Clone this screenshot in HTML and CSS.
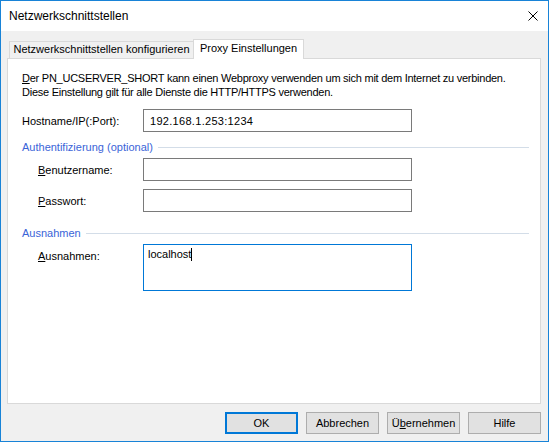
FILE: index.html
```html
<!DOCTYPE html>
<html lang="de">
<head>
<meta charset="utf-8">
<title>Netzwerkschnittstellen</title>
<link rel="stylesheet" href="styles.css">
</head>
<body>
<div class="window">
  <div class="titlebar">
    <span class="title">Netzwerkschnittstellen</span>
    <svg class="close" width="10" height="10" viewBox="0 0 10 10" aria-hidden="true"><path d="M0.5 0.5 L9.5 9.5 M9.5 0.5 L0.5 9.5" stroke="#000" stroke-width="1" fill="none"/></svg>
  </div>
  <div class="body">
    <div class="tabs">
      <div class="tab">Netzwerkschnittstellen konfigurieren</div>
      <div class="tab active">Proxy Einstellungen</div>
    </div>
    <div class="panel">
      <p class="intro"><u>D</u>er PN_UCSERVER_SHORT kann einen Webproxy verwenden um sich mit dem Internet zu verbinden.<br>Diese Einstellung gilt für alle Dienste die HTTP/HTTPS verwenden.</p>
      <div class="row">
        <span class="lbl">Hostname/IP(:Port):</span>
        <div class="input ip">192.168.1.253:1234</div>
      </div>
      <div class="group"><span>Authentifizierung (optional)</span><i class="rule"></i></div>
      <div class="row sub first">
        <span class="lbl"><u>B</u>enutzername:</span>
        <div class="input"></div>
      </div>
      <div class="row sub">
        <span class="lbl"><u>P</u>asswort:</span>
        <div class="input"></div>
      </div>
      <div class="group second"><span>Ausnahmen</span><i class="rule"></i></div>
      <div class="row sub first top">
        <span class="lbl"><u>A</u>usnahmen:</span>
        <div class="input area">localhost<span class="caret"></span></div>
      </div>
    </div>
    <div class="buttons">
      <button class="btn default">OK</button>
      <button class="btn">Abbrechen</button>
      <button class="btn">Ü<u>b</u>ernehmen</button>
      <button class="btn">Hilfe</button>
    </div>
  </div>
</div>
</body>
</html>
```
FILE: styles.css
```css
html, body {
  margin: 0;
  padding: 0;
}
body {
  width: 549px;
  height: 442px;
  overflow: hidden;
  font-family: "Liberation Sans", Arial, sans-serif;
  font-size: 11px;
  line-height: 14px;
  color: #000;
  background: #f0f0f0;
}
.window {
  box-sizing: border-box;
  width: 549px;
  height: 442px;
  border: 1px solid #1883d7;
  background: #f0f0f0;
  display: flex;
  flex-direction: column;
}
.titlebar {
  height: 30px;
  flex: none;
  background: #fff;
  display: flex;
  align-items: center;
  padding: 0 10px 0 8px;
}
.title {
  flex: 1;
  font-size: 12px;
}
.close {
  display: block;
}
.body {
  flex: 1;
  display: flex;
  flex-direction: column;
  padding: 8px 7px 7px 6px;
}
.tabs {
  display: flex;
  align-items: flex-end;
  height: 19px;
  margin-left: 2px;
  flex: none;
}
.tab {
  box-sizing: border-box;
  height: 17px;
  width: 184px;
  border: 1px solid #d9d9d9;
  border-bottom: none;
  border-right: none;
  background: #f0f0f0;
  text-align: center;
  line-height: 15px;
  white-space: nowrap;
}
.tab.active {
  position: relative;
  z-index: 1;
  width: 111px;
  height: 20px;
  margin-bottom: -1px;
  padding-top: 1px;
  border-right: 1px solid #d9d9d9;
  background: #fff;
}
.panel {
  box-sizing: border-box;
  flex: none;
  height: 346px;
  border: 1px solid #d9d9d9;
  background: #fff;
  padding: 12px 11px 0 14px;
}
.intro {
  margin: 0 0 10px;
  white-space: nowrap;
  letter-spacing: -0.25px;
}
.row {
  display: flex;
  align-items: center;
}
.row.top {
  align-items: flex-start;
}
.row.top .lbl {
  padding-top: 5px;
}
.lbl {
  flex: none;
  width: 121px;
  padding-top: 1px;
}
.row.sub .lbl {
  width: 105px;
  padding-left: 16px;
}
.row.sub {
  margin-top: 8px;
}
.row.sub.first {
  margin-top: 4px;
}
.input {
  box-sizing: border-box;
  flex: none;
  width: 269px;
  height: 23px;
  border: 1px solid #7a7a7a;
  background: #fff;
}
.ip {
  display: flex;
  align-items: center;
  padding-left: 6px;
  letter-spacing: 0.3px;
}
.area {
  height: 47px;
  border-color: #0078d7;
  padding: 2px 4px;
}
.caret {
  display: inline-block;
  width: 1px;
  height: 13px;
  background: #000;
  vertical-align: -3px;
}
.group {
  display: flex;
  align-items: center;
  gap: 5px;
  margin-top: 8px;
  color: #3a64d8;
  white-space: nowrap;
}
.group.second {
  margin-top: 14px;
}
.rule {
  flex: 1;
  height: 1px;
  background: #d3dde8;
}
.buttons {
  display: flex;
  justify-content: flex-end;
  gap: 8px;
  margin-top: 8px;
  flex: none;
}
.btn {
  box-sizing: border-box;
  width: 73px;
  height: 22px;
  margin: 0;
  padding: 0;
  border: 1px solid #adadad;
  background: #e1e1e1;
  font-family: inherit;
  font-size: 11px;
  color: #000;
  line-height: 14px;
}
.btn.default {
  border: 2px solid #0078d7;
}
```
